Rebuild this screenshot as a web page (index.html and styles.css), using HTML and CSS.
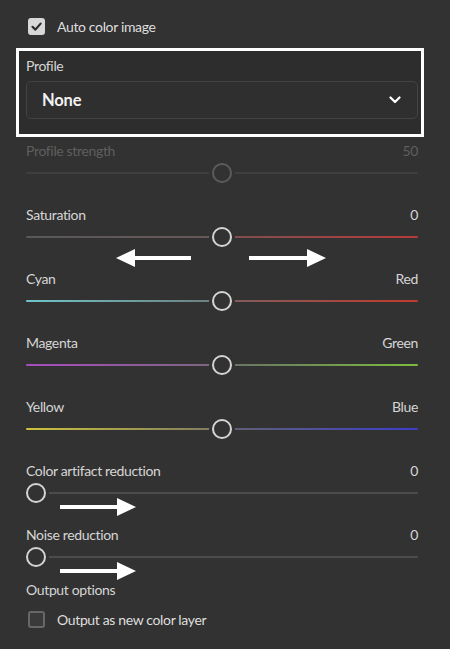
FILE: index.html
```html
<!DOCTYPE html>
<html lang="en">
<head>
    <meta charset="UTF-8">
    <meta name="viewport" content="width=device-width, initial-scale=1.0">
    <title>Auto color</title>
    <link rel="stylesheet" href="styles.css">
</head>
<body>
    <div class="panel">
        <label class="check-row top">
            <span class="box checked">
                <svg viewBox="0 0 17 17" width="17" height="17"><path d="M4.5 8.8 L7.4 11.6 L12.6 5.6" fill="none" stroke="#2b2b2b" stroke-width="2.2" stroke-linecap="round" stroke-linejoin="round"/></svg>
            </span>
            <span class="check-text">Auto color image</span>
        </label>

        <div class="profile-box">
            <div class="label">Profile</div>
            <div class="select">
                <span>None</span>
                <svg class="chev" viewBox="0 0 12 8" width="12" height="8"><path d="M1.5 1.5 L6 6 L10.5 1.5" fill="none" stroke="#fff" stroke-width="2.2" stroke-linecap="round" stroke-linejoin="round"/></svg>
            </div>
        </div>

        <!-- sliders -->
        <div class="slider disabled">
            <div class="row"><span>Profile strength</span><span>50</span></div>
            <div class="track plain"><span class="thumb mid"></span></div>
        </div>

        <div class="slider">
            <div class="row"><span>Saturation</span><span>0</span></div>
            <div class="track sat"><span class="thumb mid"></span></div>
            <svg class="arrow sat-left" viewBox="0 0 76 20" width="76" height="20"><path d="M0 10 L19 1 L19 8 L75 8 L75 12 L19 12 L19 19 Z" fill="#fff"/></svg>
            <svg class="arrow sat-right" viewBox="0 0 78 20" width="78" height="20"><path d="M77 10 L58 1 L58 8 L0 8 L0 12 L58 12 L58 19 Z" fill="#fff"/></svg>
        </div>

        <div class="slider">
            <div class="row"><span>Cyan</span><span>Red</span></div>
            <div class="track cyan-red"><span class="thumb mid"></span></div>
        </div>

        <div class="slider">
            <div class="row"><span>Magenta</span><span>Green</span></div>
            <div class="track magenta-green"><span class="thumb mid"></span></div>
        </div>

        <div class="slider">
            <div class="row"><span>Yellow</span><span>Blue</span></div>
            <div class="track yellow-blue"><span class="thumb mid"></span></div>
        </div>

        <div class="slider">
            <div class="row"><span>Color artifact reduction</span><span>0</span></div>
            <div class="track plain dark"><span class="thumb start"></span></div>
            <svg class="arrow low" viewBox="0 0 77 20" width="77" height="20"><path d="M76 10 L57 1 L57 8 L0 8 L0 12 L57 12 L57 19 Z" fill="#fff"/></svg>
        </div>

        <div class="slider last">
            <div class="row"><span>Noise reduction</span><span>0</span></div>
            <div class="track plain dark"><span class="thumb start"></span></div>
            <svg class="arrow low" viewBox="0 0 77 20" width="77" height="20"><path d="M76 10 L57 1 L57 8 L0 8 L0 12 L57 12 L57 19 Z" fill="#fff"/></svg>
        </div>

        <div class="label out">Output options</div>
        <label class="check-row">
            <span class="box"></span>
            <span class="check-text">Output as new color layer</span>
        </label>
    </div>
</body>
</html>
```

FILE: styles.css
```css
body {
    margin: 0;
    background: #323232;
    font-family: Lato, 'Open Sans', sans-serif;
    color: #d6d6d6;
    letter-spacing: -0.35px;
}

.panel {
    padding: 17px 32px 0 26px;
}

.check-row {
    display: flex;
    align-items: center;
    height: 20px;
    gap: 12px;
    padding-left: 2px;
}

.check-row.top {
    margin-top: -1px;
}

.check-text {
    font-size: 14px;
    color: #dedede;
}

.box {
    width: 17px;
    height: 17px;
    box-sizing: border-box;
    border-radius: 3px;
    border: 2px solid #676767;
    background: #3a3a3a;
}

.box.checked {
    border: none;
    background: #d8d8d8;
}

.box svg {
    display: block;
}

.profile-box {
    margin: 12px -6px 0 -10px;
    border: 3px solid #fff;
    padding: 5px 3px 15px 7px;
    background: #2d2d2d;
}

.label {
    font-size: 14px;
    line-height: 20px;
    color: #d6d6d6;
}

.select {
    margin-top: 5px;
    height: 38px;
    box-sizing: border-box;
    border: 1px solid #444;
    border-radius: 5px;
    background: #2f2f2f;
    display: flex;
    align-items: center;
    justify-content: space-between;
    padding: 0 16px 0 15px;
    font-size: 16.5px;
    font-weight: 700;
    color: #f2f2f2;
    letter-spacing: -0.2px;
}

.chev {
    display: block;
}

.slider {
    position: relative;
    height: 64px;
}

.slider.disabled {
    margin-top: 4px;
}

.slider.last {
    height: 55px;
}

.row {
    display: flex;
    justify-content: space-between;
    font-size: 14px;
    line-height: 20px;
}

.track {
    position: relative;
    height: 2px;
    margin-top: 11px;
    border-radius: 1px;
}

.thumb {
    position: absolute;
    top: -9px;
    width: 20px;
    height: 20px;
    box-sizing: border-box;
    border-radius: 50%;
    border: 2px solid #d4d4d4;
    background: #323232;
    box-shadow: 0 0 0 3px #323232;
}

.thumb.mid {
    left: calc(50% - 10px);
}

.thumb.start {
    left: 0;
}

.track.plain {
    background: #4a4a4a;
}

.track.dark {
    background: #4c4c4c;
}

.disabled .row {
    color: #5f5f5f;
}

.disabled .track {
    background: #3f3f3f;
}

.disabled .thumb {
    border-color: #5c5c5c;
}

.track.sat {
    background: linear-gradient(to right, #585858, #6a5858 50%, #7c5050 50%, #b83a3a);
}

.track.cyan-red {
    background: linear-gradient(to right, #6ec6c8, #6e7a7a 50%, #7c5e5e 50%, #c23a2c);
}

.track.magenta-green {
    background: linear-gradient(to right, #a84cc0, #7a687c 50%, #687068 50%, #7cbc3c);
}

.track.yellow-blue {
    background: linear-gradient(to right, #ccc23c, #7c7a62 50%, #626270 50%, #3c3ecc);
}

.arrow {
    position: absolute;
}

.sat-left {
    left: 90px;
    top: 43px;
}

.sat-right {
    left: 223px;
    top: 43px;
}

.arrow.low {
    left: 34px;
    top: 36px;
}

.label.out {
    margin-bottom: 9px;
}
```
